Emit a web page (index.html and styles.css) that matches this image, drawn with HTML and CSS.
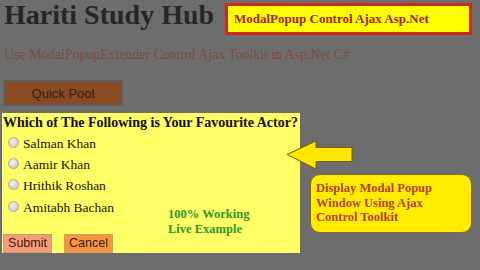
FILE: index.html
```html
<!DOCTYPE html>
<html>
<head>
<meta charset="utf-8">
<link rel="stylesheet" href="styles.css">
</head>
<body>
<header class="top">
  <h1 class="title">Hariti Study Hub</h1>
  <div class="badge">ModalPopup Control Ajax Asp.Net</div>
</header>
<p class="sub">Use ModalPopupExtender Control Ajax Toolkit in Asp.Net C#</p>
<button class="pool">Quick Pool</button>
<section class="stage">
  <div class="panel">
    <div class="question">Which of The Following is Your Favourite Actor?</div>
    <div class="body">
      <div class="left">
        <div class="opt"><span class="radio"></span><span class="lbl">Salman Khan</span></div>
        <div class="opt"><span class="radio"></span><span class="lbl">Aamir Khan</span></div>
        <div class="opt"><span class="radio"></span><span class="lbl">Hrithik Roshan</span></div>
        <div class="opt"><span class="radio"></span><span class="lbl">Amitabh Bachan</span></div>
        <div class="btns">
          <button class="btn submit">Submit</button>
          <button class="btn cancel">Cancel</button>
        </div>
      </div>
      <div class="note">100% Working<br>Live Example</div>
    </div>
  </div>
  <aside class="aside">
    <svg class="arrow" width="68" height="32" viewBox="0 0 68 32">
      <polygon points="1,14.5 30,1 30,7.5 66,7.5 66,21.5 30,21.5 30,29" fill="#ffe600" stroke="#7a5a10" stroke-width="1"/>
    </svg>
    <div class="callout">Display Modal Popup<br>Window Using Ajax<br>Control Toolkit</div>
  </aside>
</section>
</body>
</html>
```

FILE: styles.css
```css
html, body {
  margin: 0;
  padding: 0;
  background: #6d6d6d;
  width: 480px;
  height: 270px;
  overflow: hidden;
}
.top {
  display: flex;
  align-items: flex-start;
  padding: 1px 0 0 4px;
  height: 35px;
}
.title {
  margin: 0;
  font-family: "Liberation Serif", "Times New Roman", "DejaVu Serif", serif;
  font-weight: bold;
  font-size: 28px;
  line-height: 28px;
  color: #262626;
  width: 221px;
  white-space: nowrap;
}
.badge {
  box-sizing: border-box;
  margin-top: 2px;
  width: 247px;
  height: 32px;
  border: 3px solid #d0281c;
  background: #ffff00;
  padding-left: 6px;
  font-family: "Liberation Serif", "Times New Roman", serif;
  font-weight: bold;
  font-size: 13px;
  line-height: 26px;
  color: #a3200c;
  white-space: nowrap;
}
.sub {
  margin: 10px 0 0 4px;
  font-family: "Liberation Serif", "Times New Roman", serif;
  font-size: 13.8px;
  line-height: 18px;
  color: #7c4c40;
  white-space: nowrap;
}
.pool {
  display: block;
  box-sizing: border-box;
  margin: 16px 0 0 3px;
  width: 120px;
  height: 26px;
  background: #8a4a22;
  border: 2px solid #5e5e5e;
  font-family: "Liberation Sans", Arial, sans-serif;
  font-size: 13px;
  color: #33210f;
  padding: 0;
}
.stage {
  display: flex;
  margin-top: 7px;
}
.panel {
  box-sizing: border-box;
  margin-left: 2px;
  width: 298px;
  height: 140px;
  background: #ffff66;
}
.question {
  font-family: "Liberation Serif", "Times New Roman", serif;
  font-weight: bold;
  font-size: 14px;
  line-height: 20px;
  color: #111100;
  padding-left: 1px;
  white-space: nowrap;
}
.body {
  display: flex;
}
.left {
  width: 166px;
}
.opt {
  display: flex;
  align-items: center;
  height: 21.3px;
  padding-left: 6px;
  white-space: nowrap;
}
.lbl {
  font-family: "Liberation Serif", "Times New Roman", serif;
  font-size: 13.5px;
  line-height: 18px;
  color: #141400;
}
.radio {
  box-sizing: border-box;
  width: 11px;
  height: 11px;
  border-radius: 50%;
  margin-right: 4px;
  margin-top: -3px;
  background: radial-gradient(circle at 40% 35%, #f4f4f4 0%, #d6d6d6 55%, #b8b8b8 100%);
  border: 1px solid #a8a8a0;
}
.btns {
  display: flex;
  gap: 12px;
  margin-top: 16px;
  padding-left: 1px;
}
.btn {
  box-sizing: border-box;
  height: 19px;
  padding: 0;
  font-family: "Liberation Sans", Arial, sans-serif;
  font-size: 12.5px;
  line-height: 17px;
  color: #3a1a10;
  border: 1px solid #c9a070;
}
.submit {
  width: 49px;
  background: #f79c78;
}
.cancel {
  width: 49px;
  background: #f7963e;
}
.note {
  padding-top: 74px;
  font-family: "Liberation Serif", "Times New Roman", serif;
  font-weight: bold;
  font-size: 12.5px;
  line-height: 15px;
  color: #2a9a2a;
  white-space: nowrap;
}
.aside {
  display: flex;
  flex-direction: column;
  padding-top: 27px;
}
.arrow {
  display: block;
  margin-left: -14px;
}
.callout {
  box-sizing: border-box;
  margin: 2px 0 0 10px;
  width: 162px;
  height: 59px;
  border: 1px solid #8a6a2a;
  border-radius: 10px;
  background: #ffec00;
  padding: 6px 0 0 5px;
  font-family: "Liberation Serif", "Times New Roman", serif;
  font-weight: bold;
  font-size: 12.5px;
  line-height: 14.5px;
  color: #b3401a;
  white-space: nowrap;
}
```
